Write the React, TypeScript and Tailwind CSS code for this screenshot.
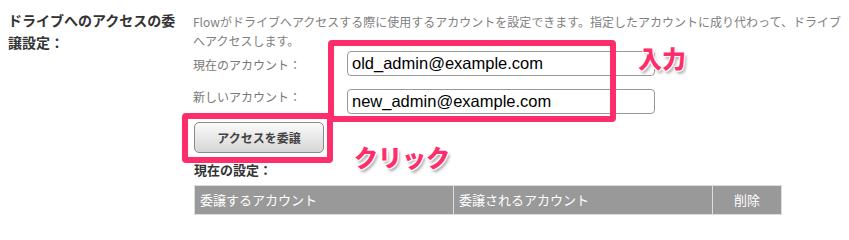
import { useState } from "react";

const jp = "font-['Noto_Sans_CJK_JP',sans-serif]";
const outline =
  "[text-shadow:0_0_2px_#fff,1px_1px_0_#fff,-1px_-1px_0_#fff,1px_-1px_0_#fff,-1px_1px_0_#fff,2px_3px_3px_rgba(0,0,0,0.35)]";

export default function App() {
  const [current, setCurrent] = useState("old_admin@example.com");
  const [next, setNext] = useState("new_admin@example.com");

  return (
    <div className={`relative h-[227px] w-[849px] overflow-hidden bg-white ${jp}`}>
      <div className="flex">
        {/* section title */}
        <div className="w-[185px] shrink-0 pl-[8px] pt-[9px] text-[14px] font-bold leading-[22px] text-[#333]">
          ドライブへのアクセスの委譲設定：
        </div>

        <div className="w-[656px] pl-[8px] pt-[12px]">
          <p className="text-[12px] leading-[19px] text-[#808080]">
            Flowがドライブへアクセスする際に使用するアカウントを設定できます。指定したアカウントに成り代わって、ドライブへアクセスします。
          </p>

          <div className="flex">
            <div className="flex w-[154px] flex-col gap-[14px] pt-[6px] text-[12px] leading-[18px] text-[#777]">
              <span>現在のアカウント：</span>
              <span>新しいアカウント：</span>
            </div>
            <div className="mt-[1px] flex flex-col gap-[13px]">
              <input
                value={current}
                onChange={(e) => setCurrent(e.target.value)}
                className="h-[25px] w-[308px] rounded-[4px] border border-[#999] bg-white px-[4px] font-['Liberation_Sans',sans-serif] text-[16.5px] text-black outline-none"
              />
              <input
                value={next}
                onChange={(e) => setNext(e.target.value)}
                className="h-[25px] w-[308px] rounded-[4px] border border-[#999] bg-white px-[4px] font-['Liberation_Sans',sans-serif] text-[16.5px] text-black outline-none"
              />
            </div>
          </div>

          <button
            type="button"
            className="mt-[8px] ml-[1px] flex h-[31px] w-[130px] items-center justify-center rounded-[5px] border border-[#8a8a8a] bg-gradient-to-b from-[#fbfbfb] to-[#d6d6d6] text-[12px] font-bold text-[#444]"
          >
            アクセスを委譲
          </button>

          <div className="mt-[8px] ml-[1px] text-[13px] font-bold leading-[18px] text-[#333]">
            現在の設定：
          </div>

          <table className="mt-[6px] ml-[1px] w-[588px] border-collapse text-[13px] text-white">
            <thead>
              <tr className="h-[29px] bg-[#999]">
                <th className="w-[259px] border border-[#ddd] px-[5px] text-left font-normal">
                  委譲するアカウント
                </th>
                <th className="w-[259px] border border-[#ddd] px-[5px] text-left font-normal">
                  委譲されるアカウント
                </th>
                <th className="border border-[#ddd] text-center font-normal">削除</th>
              </tr>
            </thead>
          </table>
        </div>
      </div>

      {/* annotations */}
      <div className="absolute left-[328px] top-[40px] h-[82px] w-[288px] rounded-[4px] border-[6px] border-[#fe2d6b]" />
      <div className="absolute left-[182px] top-[113px] h-[50px] w-[151px] rounded-[4px] border-[6px] border-[#fe2d6b]" />
      <div className={`absolute left-[638px] top-[51px] text-[24px] font-black leading-[14px] text-[#fe2d6b] ${outline}`}>
        入力
      </div>
      <div className={`absolute left-[354px] top-[143px] text-[24px] font-black leading-[28px] text-[#fe2d6b] ${outline}`}>
        クリック
      </div>
    </div>
  );
}
